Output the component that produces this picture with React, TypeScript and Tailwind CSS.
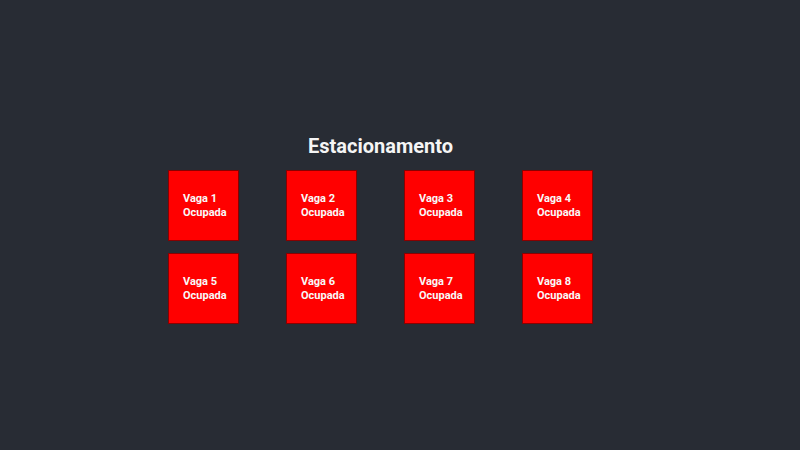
import React from "react";

export default function App() {
  const spots = [1, 2, 3, 4, 5, 6, 7, 8];
  return (
    <div className="min-h-screen w-full bg-[#282c34] text-white" style={{ fontFamily: "Roboto, 'Noto Sans', sans-serif" }}>
      <div className="pt-[133px] ml-[168px] w-[425px] flex flex-col items-center">
        <h1 className="text-[20px] leading-[26px] font-bold text-[#f5f5f5]">Estacionamento</h1>
        <div className="mt-[11px] grid grid-cols-4 gap-x-[47px] gap-y-[12px]">
          {spots.map((n) => (
            <div
              key={n}
              className="w-[71px] h-[71px] bg-[#ff0000] border border-[#8a0000] flex flex-col justify-center pl-[14px] text-[11px] leading-[14px] font-bold text-[#f8f8f8]"
            >
              <span>Vaga {n}</span>
              <span>Ocupada</span>
            </div>
          ))}
        </div>
      </div>
    </div>
  );
}
